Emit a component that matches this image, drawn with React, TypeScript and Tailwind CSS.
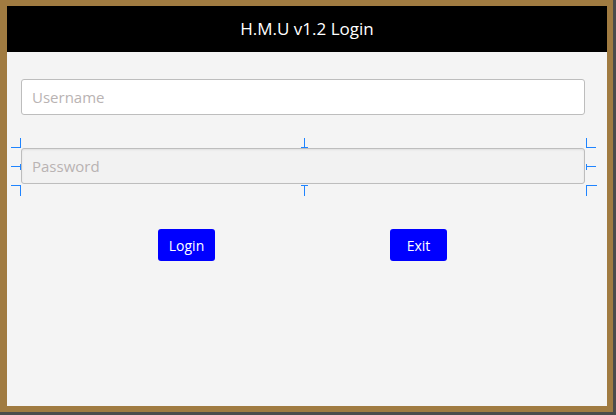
import React from "react";

const Marker = ({ className, d }: { className: string; d: string }) => (
  <svg
    className={`absolute ${className}`}
    width="11"
    height="11"
    viewBox="0 0 11 11"
    fill="none"
    stroke="#1f84ff"
    strokeWidth="1.5"
    shapeRendering="crispEdges"
  >
    <path d={d} />
  </svg>
);

export default function App() {
  return (
    <div
      className="w-[616px] h-[415px] bg-[#4b4b4b] overflow-hidden"
      style={{ fontFamily: '"Open Sans", "Noto Sans", sans-serif' }}
    >
      <div className="w-[613px] h-[412px] bg-[#a07b41] pt-[6px] pl-[7px]">
        <div className="w-[600px] h-[400px] bg-[#f4f4f4] flex flex-col">
          {/* Title bar */}
          <div className="h-[46px] bg-black flex items-center justify-center text-white text-[17px]">
            H.M.U v1.2 Login
          </div>

          <div className="pl-[14px] pt-[27px] flex flex-col">
            <input
              placeholder="Username"
              className="w-[564px] h-[36px] bg-white border border-[#bdbdbd] rounded-[3px] px-[10px] text-[15px] placeholder:text-[#b9b3b3] outline-none"
            />

            <div className="relative mt-[33px] w-[564px] h-[36px]">
              <input
                placeholder="Password"
                type="password"
                className="w-full h-full bg-[#f2f2f2] border border-[#bdbdbd] rounded-[3px] px-[10px] text-[15px] placeholder:text-[#b9b3b3] outline-none shadow-[inset_0_1px_2px_rgba(0,0,0,0.08)]"
              />
              {/* selection handles */}
              <Marker className="left-[-10px] top-[-10px]" d="M0 9.5H9.5V0" />
              <Marker className="left-[-10px] top-[13px]" d="M0 5.5H10M9.5 2.5V8.5" />
              <Marker className="left-[-10px] top-[37px]" d="M0 0.5H9.5V11" />
              <Marker className="left-[278px] top-[-10px]" d="M5.5 0V9.5M2 9.5H9" />
              <Marker className="left-[278px] top-[37px]" d="M5.5 1V11M2 0.5H9" />
              <Marker className="left-[565px] top-[-10px]" d="M0.5 0V9.5H10" />
              <Marker className="left-[565px] top-[13px]" d="M0.5 2.5V8.5M0 5.5H10" />
              <Marker className="left-[565px] top-[37px]" d="M11 0.5H0.5V11" />
            </div>
          </div>

          <div className="flex pl-[151px] pt-[45px] gap-[175px]">
            <button className="w-[57px] h-[32px] bg-[#0000ff] text-white text-[14px] rounded-[3px]">
              Login
            </button>
            <button className="w-[57px] h-[32px] bg-[#0000ff] text-white text-[14px] rounded-[3px]">
              Exit
            </button>
          </div>
        </div>
      </div>
    </div>
  );
}
